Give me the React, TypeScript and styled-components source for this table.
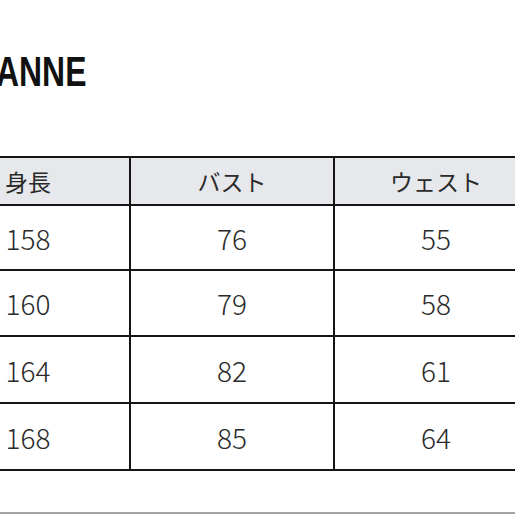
import React from "react";
import styled, { createGlobalStyle } from "styled-components";

const Global = createGlobalStyle`
  html, body { margin: 0; padding: 0; background: #ffffff; overflow: hidden; }
`;

const Page = styled.div`
  width: 515px;
  height: 515px;
  overflow: hidden;
  display: flex;
  flex-direction: column;
  background: #fff;
`;

const TitleBar = styled.header`
  height: 156px;
  padding-top: 48px;
  box-sizing: border-box;
  flex-shrink: 0;
  overflow: hidden;
`;

const Title = styled.h1`
  margin: 0 0 0 -4px;
  font-family: "Liberation Sans", Arial, sans-serif;
  font-weight: 700;
  font-size: 42px;
  line-height: 48px;
  color: #111;
  transform: scaleX(0.76);
  transform-origin: left center;
  white-space: nowrap;
`;

const SizeTable = styled.div`
  display: flex;
  flex-direction: column;
  width: 515px;
  flex-shrink: 0;
  border-top: 2px solid #151515;
  font-family: "Noto Sans CJK JP", "Noto Sans", sans-serif;
  color: #2a2a2a;
`;

const Row = styled.div<{ $head?: boolean; $h: number }>`
  display: grid;
  grid-template-columns: 129px 204px 182px;
  height: ${(p) => p.$h}px;
  border-bottom: 2px solid #151515;
  background: ${(p) => (p.$head ? "#e6e8eb" : "#ffffff")};
`;

const Cell = styled.div<{ $head?: boolean; $col: number }>`
  display: flex;
  align-items: center;
  justify-content: center;
  box-sizing: border-box;
  border-left: ${(p) => (p.$col === 0 ? "none" : "2px solid #151515")};
  padding-right: ${(p) => (p.$col === 0 ? "73px" : "0")};
  padding-left: ${(p) => (p.$col === 2 ? "22px" : "0")};
  font-size: ${(p) => (p.$head ? "23px" : "28px")};
  font-weight: ${(p) => (p.$head ? 400 : 300)};
  white-space: nowrap;
`;

const BottomRule = styled.div`
  margin-top: auto;
  margin-bottom: 1px;
  height: 2px;
  background: #a3a3a3;
  flex-shrink: 0;
`;

const headers = ["身長", "バスト", "ウェスト"];
const rows = [
  ["158", "76", "55"],
  ["160", "79", "58"],
  ["164", "82", "61"],
  ["168", "85", "64"],
];
const rowHeights = [63, 64, 65, 65];

export default function App() {
  return (
    <>
      <Global />
      <Page>
        <TitleBar>
          <Title>ANNE</Title>
        </TitleBar>
        <SizeTable role="table">
          <Row $head $h={46} role="row">
            {headers.map((h, j) => (
              <Cell key={h} $head $col={j} role="columnheader">
                {h}
              </Cell>
            ))}
          </Row>
          {rows.map((r, i) => (
            <Row key={i} $h={rowHeights[i]} role="row">
              {r.map((v, j) => (
                <Cell key={j} $col={j} role="cell">
                  {v}
                </Cell>
              ))}
            </Row>
          ))}
        </SizeTable>
        <BottomRule />
      </Page>
    </>
  );
}
